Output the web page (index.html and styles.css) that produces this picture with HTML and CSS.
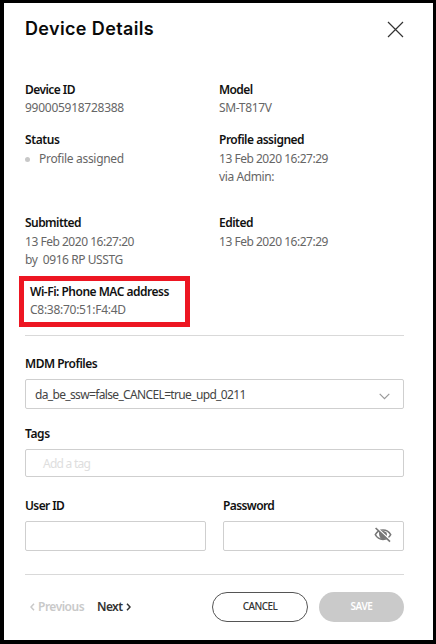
FILE: index.html
```html
<!DOCTYPE html>
<html lang="en">
<head>
<meta charset="utf-8">
<title>Device Details</title>
<link rel="stylesheet" href="styles.css">
</head>
<body>
<main class="dialog">
  <header class="head">
    <h1>Device Details</h1>
    <svg class="close" width="17" height="17" viewBox="0 0 17 17"><path d="M1 1 16 16M16 1 1 16"/></svg>
  </header>
  <section class="details">
    <div class="item"><h2 class="t-device">Device ID</h2><p class="t-num">990005918728388</p></div>
    <div class="item"><h2 class="t-model">Model</h2><p class="t-sm">SM-T817V</p></div>
    <div class="item low"><h2 class="t-status">Status</h2><p class="state t-pa"><i class="dot"></i>Profile assigned</p></div>
    <div class="item low"><h2 class="t-pah">Profile assigned</h2><p class="t-date">13 Feb 2020 16:27:29</p><p class="t-via">via Admin:</p></div>
    <div class="item low"><h2 class="t-sub">Submitted</h2><p class="t-date">13 Feb 2020 16:27:20</p><p class="t-by">by  0916 RP USSTG</p></div>
    <div class="item low"><h2 class="t-edit">Edited</h2><p class="t-date">13 Feb 2020 16:27:29</p></div>
  </section>
  <section class="mac"><h2 class="t-wifi">Wi-Fi: Phone MAC address</h2><p class="t-mac">C8:38:70:51:F4:4D</p></section>
  <form class="form">
    <div class="field"><h2 class="t-mdm">MDM Profiles</h2>
      <div class="box select"><span class="t-da">da_be_ssw=false_CANCEL=true_upd_0211</span><svg width="11" height="7" viewBox="0 0 11 7"><path d="M.7.8 5.5 5.6 10.3.8"/></svg></div></div>
    <div class="field tags"><h2 class="t-tags">Tags</h2>
      <div class="box tag"><span class="t-add">Add a tag</span></div></div>
    <div class="pair">
      <div class="field"><h2 class="t-user">User ID</h2><div class="box"></div></div>
      <div class="field"><h2 class="t-user">Password</h2><div class="box secret">
        <svg width="18" height="16" viewBox="0 0 18 16"><path class="eye" d="M1.3 7.7C3 4.6 5.8 3 9 3s6 1.6 7.7 4.7C15 10.8 12.200 12.400 9 12.400S3 10.800 1.300 7.700Z"/><path class="iris" d="M5.300 4.800C7 3.500 11 3.500 12.500 5.500 13.600 7.500 12.800 10.500 10.500 11.900H7.500C5.200 10.500 4.500 7 5.300 4.800Z"/><path class="gap" d="M3 .8 17 13.900"/><path class="slash" d="M1.600 1 16 14.600"/></svg>
      </div></div>
    </div>
  </form>
  <footer class="foot">
    <nav class="pager">
      <span class="prev"><svg width="5" height="8" viewBox="0 0 5 8"><path d="M4 .8 1 4 4 7.200"/></svg><span class="t-prev">Previous</span></span>
      <span class="next"><span class="t-next">Next</span><svg width="5" height="8" viewBox="0 0 5 8"><path d="M1 .8 4 4 1 7.200"/></svg></span>
    </nav>
    <button class="btn cancel">CANCEL</button>
    <button class="btn save">SAVE</button>
  </footer>
</main>
</body>
</html>
```
FILE: styles.css
```css
* { box-sizing: border-box; margin: 0; padding: 0; }
body { background: #000; font-family: "Noto Sans", sans-serif; font-size: 12px; }
.dialog {
  width: 436px; height: 644px; background: #fff; color: #111;
  border: solid #000; border-width: 3px 3px 4px 4px;
  padding: 0 29px 0 21px; display: flex; flex-direction: column;
}
h1, h2, p, span, button { white-space: pre; }
h1 { font: 600 18px/26px Inter, sans-serif; letter-spacing: 0.36px; color: #0a0a0a; }
h2 { font-size: 12px; font-weight: 600; line-height: 18px; color: #111; letter-spacing: -0.5px; }
p { line-height: 18px; color: #666; }
svg { fill: none; flex: none; }
.head { display: flex; justify-content: space-between; height: 77px; padding-top: 13px; }
.close { margin-top: 5px; stroke: #333; stroke-width: 1.2; }
.details { display: grid; grid-template-columns: 194px 1fr; grid-template-rows: 50px 83px 63px; }
.item h2 { line-height: 19px; }
.low h2 { height: 20px; }
.state { display: flex; align-items: center; }
.dot { width: 5px; height: 5px; border-radius: 50%; background: #c8c8c8; margin-right: 9px; }
.mac { width: 171px; height: 51px; margin-left: -6px; border: 5px solid #ed1622; padding: 1px 0 0 6px; }
.mac h2 { line-height: 20px; height: 19px; }
.t-device, .t-sub { letter-spacing: -0.55px; }
.t-num, .t-mac { letter-spacing: -0.27px; }
.t-model, .t-user { letter-spacing: -0.6px; }
.t-sm { letter-spacing: -0.35px; }
.t-status, .t-via, .t-tags { letter-spacing: -0.4px; }
.t-pa { letter-spacing: -0.3px; }
.t-date { letter-spacing: -0.48px; }
.t-by { letter-spacing: -0.43px; }
.t-da { letter-spacing: -0.65px; }
.t-add { letter-spacing: -0.75px; }
.t-prev { letter-spacing: -0.5px; }
.t-next { letter-spacing: -0.6px; }
.form { margin-top: 8px; border: solid #d9d9d9; border-width: 1px 0; height: 240px; padding-top: 19px; }
.field h2 { height: 24px; }
.box { height: 30px; border: 1px solid #cfcfcf; border-radius: 2px; display: flex; align-items: center; justify-content: space-between; }
.select { padding: 0 13px 0 9px; color: #444; }
.select svg { margin-top: 5px; stroke: #999; stroke-width: 1.2; }
.tags { margin-top: 16px; }
.tag { height: 28px; padding-left: 17px; color: #dedede; }
.pair { display: grid; grid-template-columns: 181px 181px; gap: 17px; margin-top: 20px; }
.secret { justify-content: flex-end; padding-right: 11px; }
.secret svg { margin-top: -2px; }
.eye { stroke: #777; stroke-width: 1.500; }
.iris { fill: #777; }
.gap { stroke: #fff; stroke-width: 1.500; }
.slash { stroke: #777; stroke-width: 1.700; }
.foot { display: flex; padding-top: 17px; }
.pager { display: flex; gap: 9px; width: 187px; height: 28px; padding-left: 5px; font-weight: 600; }
.pager > span { display: flex; align-items: center; gap: 3px; }
.pager svg { stroke: currentColor; stroke-width: 1.500; margin-top: 1px; }
.prev { color: #c9c9c9; width: 58px; }
.next { color: #333; }
.btn { height: 30px; border-radius: 15px; font: 500 10px "Noto Sans", sans-serif; padding-bottom: 2px; }
.cancel { width: 96px; border: 1px solid #555; background: #fff; color: #333; letter-spacing: -0.6px; }
.save { width: 85px; margin-left: 11px; border: 0; background: #cacaca; color: #fff; font-weight: 600; letter-spacing: -0.4px; }
```
